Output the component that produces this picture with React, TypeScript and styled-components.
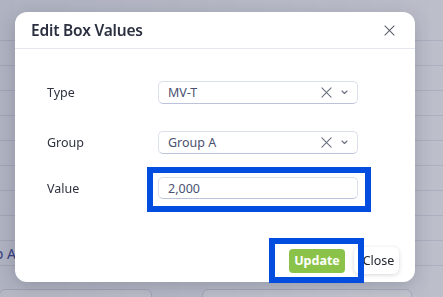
import * as React from "react";
import styled, { createGlobalStyle } from "styled-components";

const GlobalStyle = createGlobalStyle`
  html, body {
    margin: 0;
    padding: 0;
    overflow: hidden;
  }
  body {
    font-family: "Noto Sans", "Open Sans", sans-serif;
    background: #f6f7fa;
  }
`;

// page behind the dialog
const Page = styled.div`
  width: 443px;
  height: 297px;
  padding-top: 16px;
  box-sizing: border-box;
  overflow: hidden;
`;

const TableRow = styled.div`
  height: 25px;
  border-bottom: 1px solid #dfe1ea;
  box-sizing: border-box;
  display: flex;
  align-items: center;
  font-size: 14px;
  color: #3b4a9a;
  white-space: nowrap;
`;

const CutText = styled.span`
  margin-left: -38px;
`;

const CardRow = styled.div`
  display: flex;
  gap: 50px;
  margin-top: 23px;
`;

const Card = styled.div<{ $w: number }>`
  width: ${(p) => p.$w}px;
  height: 30px;
  border: 1px solid #d9dce6;
  border-radius: 6px;
  background: #fff;
  flex-shrink: 0;
`;

const Backdrop = styled.div`
  position: fixed;
  inset: 0;
  background: linear-gradient(90deg, rgba(40, 46, 80, 0.34), rgba(40, 46, 80, 0.28));
`;

// dialog
const Modal = styled.div`
  position: fixed;
  left: 15px;
  top: 12px;
  width: 400px;
  height: 270px;
  background: #fff;
  border-radius: 12px;
  box-shadow: 0 4px 18px rgba(30, 35, 60, 0.22);
  display: flex;
  flex-direction: column;
`;

const Header = styled.div`
  height: 36px;
  border-bottom: 1px solid #e4e6f0;
  display: flex;
  align-items: center;
  justify-content: space-between;
  padding: 0 20px 0 16px;
  flex-shrink: 0;
`;

const Title = styled.div`
  font-size: 15.5px;
  font-weight: 600;
  color: #2b3041;
  letter-spacing: -0.2px;
`;

const IconButton = styled.button`
  border: none;
  background: none;
  padding: 0;
  display: flex;
  color: #555a66;
  cursor: pointer;
`;

const Body = styled.div`
  flex: 1;
  display: flex;
  flex-direction: column;
  padding: 0 57px 0 32px;
`;

const Row = styled.div<{ $mt: number }>`
  display: grid;
  grid-template-columns: 111px 200px;
  align-items: center;
  margin-top: ${(p) => p.$mt}px;
`;

const Label = styled.label`
  font-size: 12.5px;
  color: #2f3340;
`;

const Field = styled.div<{ $h: number }>`
  position: relative;
  height: ${(p) => p.$h}px;
  box-sizing: border-box;
  border: 1px solid #dcdfec;
  border-bottom-color: #bcc2da;
  border-radius: 5px;
  background: #fff;
  display: flex;
  align-items: center;
  padding: 0 9px;
  font-size: 12.5px;
  color: #4a5170;
`;

const FieldText = styled.span`
  flex: 1;
`;

const SelectIcons = styled.span`
  display: flex;
  align-items: center;
  gap: 9px;
  color: #6b7080;
`;

const Highlight = styled.span<{ $t: number; $r: number; $b: number; $l: number }>`
  position: absolute;
  top: ${(p) => p.$t}px;
  right: ${(p) => p.$r}px;
  bottom: ${(p) => p.$b}px;
  left: ${(p) => p.$l}px;
  border: 6px solid #004de0;
  pointer-events: none;
  z-index: 2;
`;

const Footer = styled.div`
  display: flex;
  justify-content: flex-end;
  align-items: center;
  gap: 9px;
  padding: 0 16px 8px;
`;

const ButtonWrap = styled.div`
  position: relative;
`;

const UpdateButton = styled.button`
  width: 56px;
  height: 24px;
  border: none;
  border-radius: 4px;
  background: #8bc34a;
  color: #fff;
  font-family: inherit;
  font-weight: 700;
  font-size: 12.5px;
  padding: 0;
`;

const CloseButton = styled.button`
  width: 45px;
  height: 27px;
  border: none;
  border-radius: 6px;
  background: #fff;
  box-shadow: 0 1px 4px rgba(20, 25, 50, 0.18);
  color: #23262f;
  font-family: inherit;
  font-size: 12.5px;
  padding: 0 0 0 4px;
`;

const XIcon = ({ size = 11, stroke = 1.2 }: { size?: number; stroke?: number }) => (
  <svg width={size} height={size} viewBox="0 0 12 12" fill="none">
    <path d="M1 1 L11 11 M11 1 L1 11" stroke="currentColor" strokeWidth={stroke} strokeLinecap="round" />
  </svg>
);

const Chevron = () => (
  <svg width="7" height="5" viewBox="0 0 7 5" fill="none">
    <path d="M1 1 L3.5 3.5 L6 1" stroke="currentColor" strokeWidth="1.1" strokeLinecap="round" strokeLinejoin="round" />
  </svg>
);

const Select = ({ value }: { value: string }) => (
  <Field $h={23}>
    <FieldText>{value}</FieldText>
    <SelectIcons>
      <XIcon />
      <Chevron />
    </SelectIcons>
  </Field>
);

export default function App() {
  const rows = Array.from({ length: 10 });
  return (
    <>
      <GlobalStyle />
      <Page>
        {rows.map((_, i) => (
          <TableRow key={i}>{i === 9 ? <CutText>Group A</CutText> : null}</TableRow>
        ))}
        <CardRow>
          <Card $w={151} style={{ marginLeft: -1 }} />
          <Card $w={208} />
        </CardRow>
      </Page>
      <Backdrop />
      <Modal>
        <Header>
          <Title>Edit Box Values</Title>
          <IconButton aria-label="close">
            <XIcon size={11} stroke={1.1} />
          </IconButton>
        </Header>
        <Body>
          <Row $mt={32}>
            <Label>Type</Label>
            <Select value="MV-T" />
          </Row>
          <Row $mt={27}>
            <Label>Group</Label>
            <Select value="Group A" />
          </Row>
          <Row $mt={23}>
            <Label>Value</Label>
            <Field $h={22}>
              <FieldText>2,000</FieldText>
              <Highlight $t={-11} $r={-14} $b={-14} $l={-12} />
            </Field>
          </Row>
        </Body>
        <Footer>
          <ButtonWrap>
            <UpdateButton>Update</UpdateButton>
            <Highlight $t={-10} $r={-19} $b={-10} $l={-20} />
          </ButtonWrap>
          <CloseButton>Close</CloseButton>
        </Footer>
      </Modal>
    </>
  );
}
